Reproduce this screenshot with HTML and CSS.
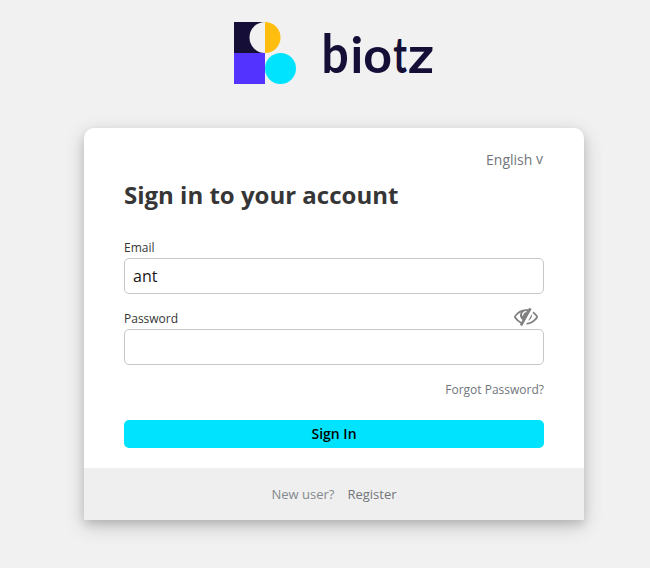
FILE: index.html
```html
<!DOCTYPE html>
<html lang="en">
<head>
<meta charset="utf-8">
<title>Sign in to biotz</title>
<link rel="stylesheet" href="styles.css">
</head>
<body>
<header class="brand">
  <svg class="logo" width="200" height="62" viewBox="0 0 200 62" role="img" aria-label="biotz">
    <path fill="#150f38" d="M0 0h31v31H0z"/>
    <path fill="#f1f1f1" d="M31 0a15.5 15.5 0 0 0 0 31z"/>
    <path fill="#ffbe0f" d="M31 0a15.5 15.5 0 0 1 0 31z"/>
    <path fill="#5333ff" d="M0 31h31v31H0z"/>
    <circle fill="#00e3ff" cx="46.5" cy="46.5" r="15.5"/>
    <g class="wordmark">
      <text transform="translate(87.6 51.3) scale(.96 1.07)">b</text>
      <text transform="translate(116.500 51.3)">i</text>
      <text transform="translate(129.300 51.3)">o</text>
      <text transform="translate(159.300 51.3) scale(.74 1)">t</text>
      <text transform="translate(173.800 51.3) scale(1.15 1)">z</text>
    </g>
  </svg>
</header>
<main class="card">
  <div class="content">
    <div class="locale"><a href="#">English <span class="caret">v</span></a></div>
    <h1>Sign in to your account</h1>
    <form>
      <label for="email">Email</label>
      <input id="email" type="text" value="ant">
      <div class="password-row">
        <label for="password">Password</label>
        <svg class="eye" viewBox="0 0 1792 1792"><path fill="currentColor" d="M555 1335l78-141q-87-63-136-159t-49-203q0-121 61-225-229 117-381 353 167 258 427 375zm389-759q0-20-14-34t-34-14q-125 0-214.5 89.5t-89.5 214.5q0 20 14 34t34 14 34-14 14-34q0-86 61-147t147-61q20 0 34-14t14-34zm363-191q0 7-1 9-106 189-316 567t-315 566l-49 89q-10 16-28 16-12 0-134-70-16-10-16-28 0-12 44-87-143-65-263.500-173t-208.500-245q-20-31-20-69t20-69q153-235 380-371t496-136q89 0 180 17l54-97q10-16 28-16 5 0 18 6t31 15.500 33 18.500 31.500 18.500 19.500 11.500q16 10 16 27zm37 447q0 139-79 253.500t-209 164.500l280-502q8 45 8 84zm448 128q0 35-20 69-39 64-109 145-150 172-347.500 267t-419.500 95l74-132q212-18 392.500-137t301.500-307q-115-179-282-294l63-112q95 64 182.500 153t144.500 184q20 34 20 69z"/></svg>
      </div>
      <input id="password" type="password">
      <div class="forgot"><a href="#">Forgot Password?</a></div>
      <button type="button">Sign In</button>
    </form>
  </div>
  <footer class="register"><span>New user?</span><a href="#">Register</a></footer>
</main>
</body>
</html>
```
FILE: styles.css
```css
* { box-sizing: border-box; }
body {
  margin: 0;
  height: 568px;
  overflow: hidden;
  background: #f1f1f1;
  font-family: "Open Sans", sans-serif;
  color: #363636;
}
a { color: inherit; text-decoration: none; }
.brand { height: 128px; padding: 22px 0 0 234px; }
.logo { display: block; overflow: visible; }
.wordmark { font: 700 50px Lato, sans-serif; fill: #150f38; }
.card {
  width: 500px;
  height: 392px;
  margin-left: 84px;
  background: #fff;
  border-radius: 10px 10px 0 0;
  box-shadow: 0 4px 8px rgba(0,0,0,.12), 0 6px 20px rgba(0,0,0,.19);
}
.content { height: 340px; padding: 22px 40px 0; }
.locale { height: 20px; padding-right: 1px; text-align: right; font-size: 14px; line-height: 20px; color: #72767b; }
.caret { display: inline-block; transform: translateY(-1px); }
h1 { margin: 9px 0 0; font-size: 24px; line-height: 32px; font-weight: 700; }
label { display: block; font-size: 12px; line-height: 20px; }
form { padding-top: 27px; }
input {
  display: block;
  width: 420px;
  height: 36px;
  margin: 0;
  padding: 0 8px;
  border: 1px solid #c7c7c7;
  border-radius: 5px;
  outline: 0;
  font: 16px "Open Sans", sans-serif;
  color: #181818;
}
.password-row { display: flex; justify-content: space-between; height: 35px; padding-top: 15px; }
.eye { width: 24px; height: 24px; margin: -5px 6px 0 0; color: #808080; }
.forgot { height: 55px; padding-top: 15px; text-align: right; font-size: 12px; line-height: 20px; color: #72767b; }
button {
  display: block;
  width: 420px;
  height: 28px;
  padding: 0;
  border: 0;
  border-radius: 5px;
  background: #00e3ff;
  font: 600 14px/28px "Open Sans", sans-serif;
  color: #030303;
}
.register {
  display: flex;
  justify-content: center;
  gap: 13px;
  height: 52px;
  background: #efefef;
  font-size: 13px;
  line-height: 52px;
  color: #72767b;
}
.register span { color: #84888c; }
```
